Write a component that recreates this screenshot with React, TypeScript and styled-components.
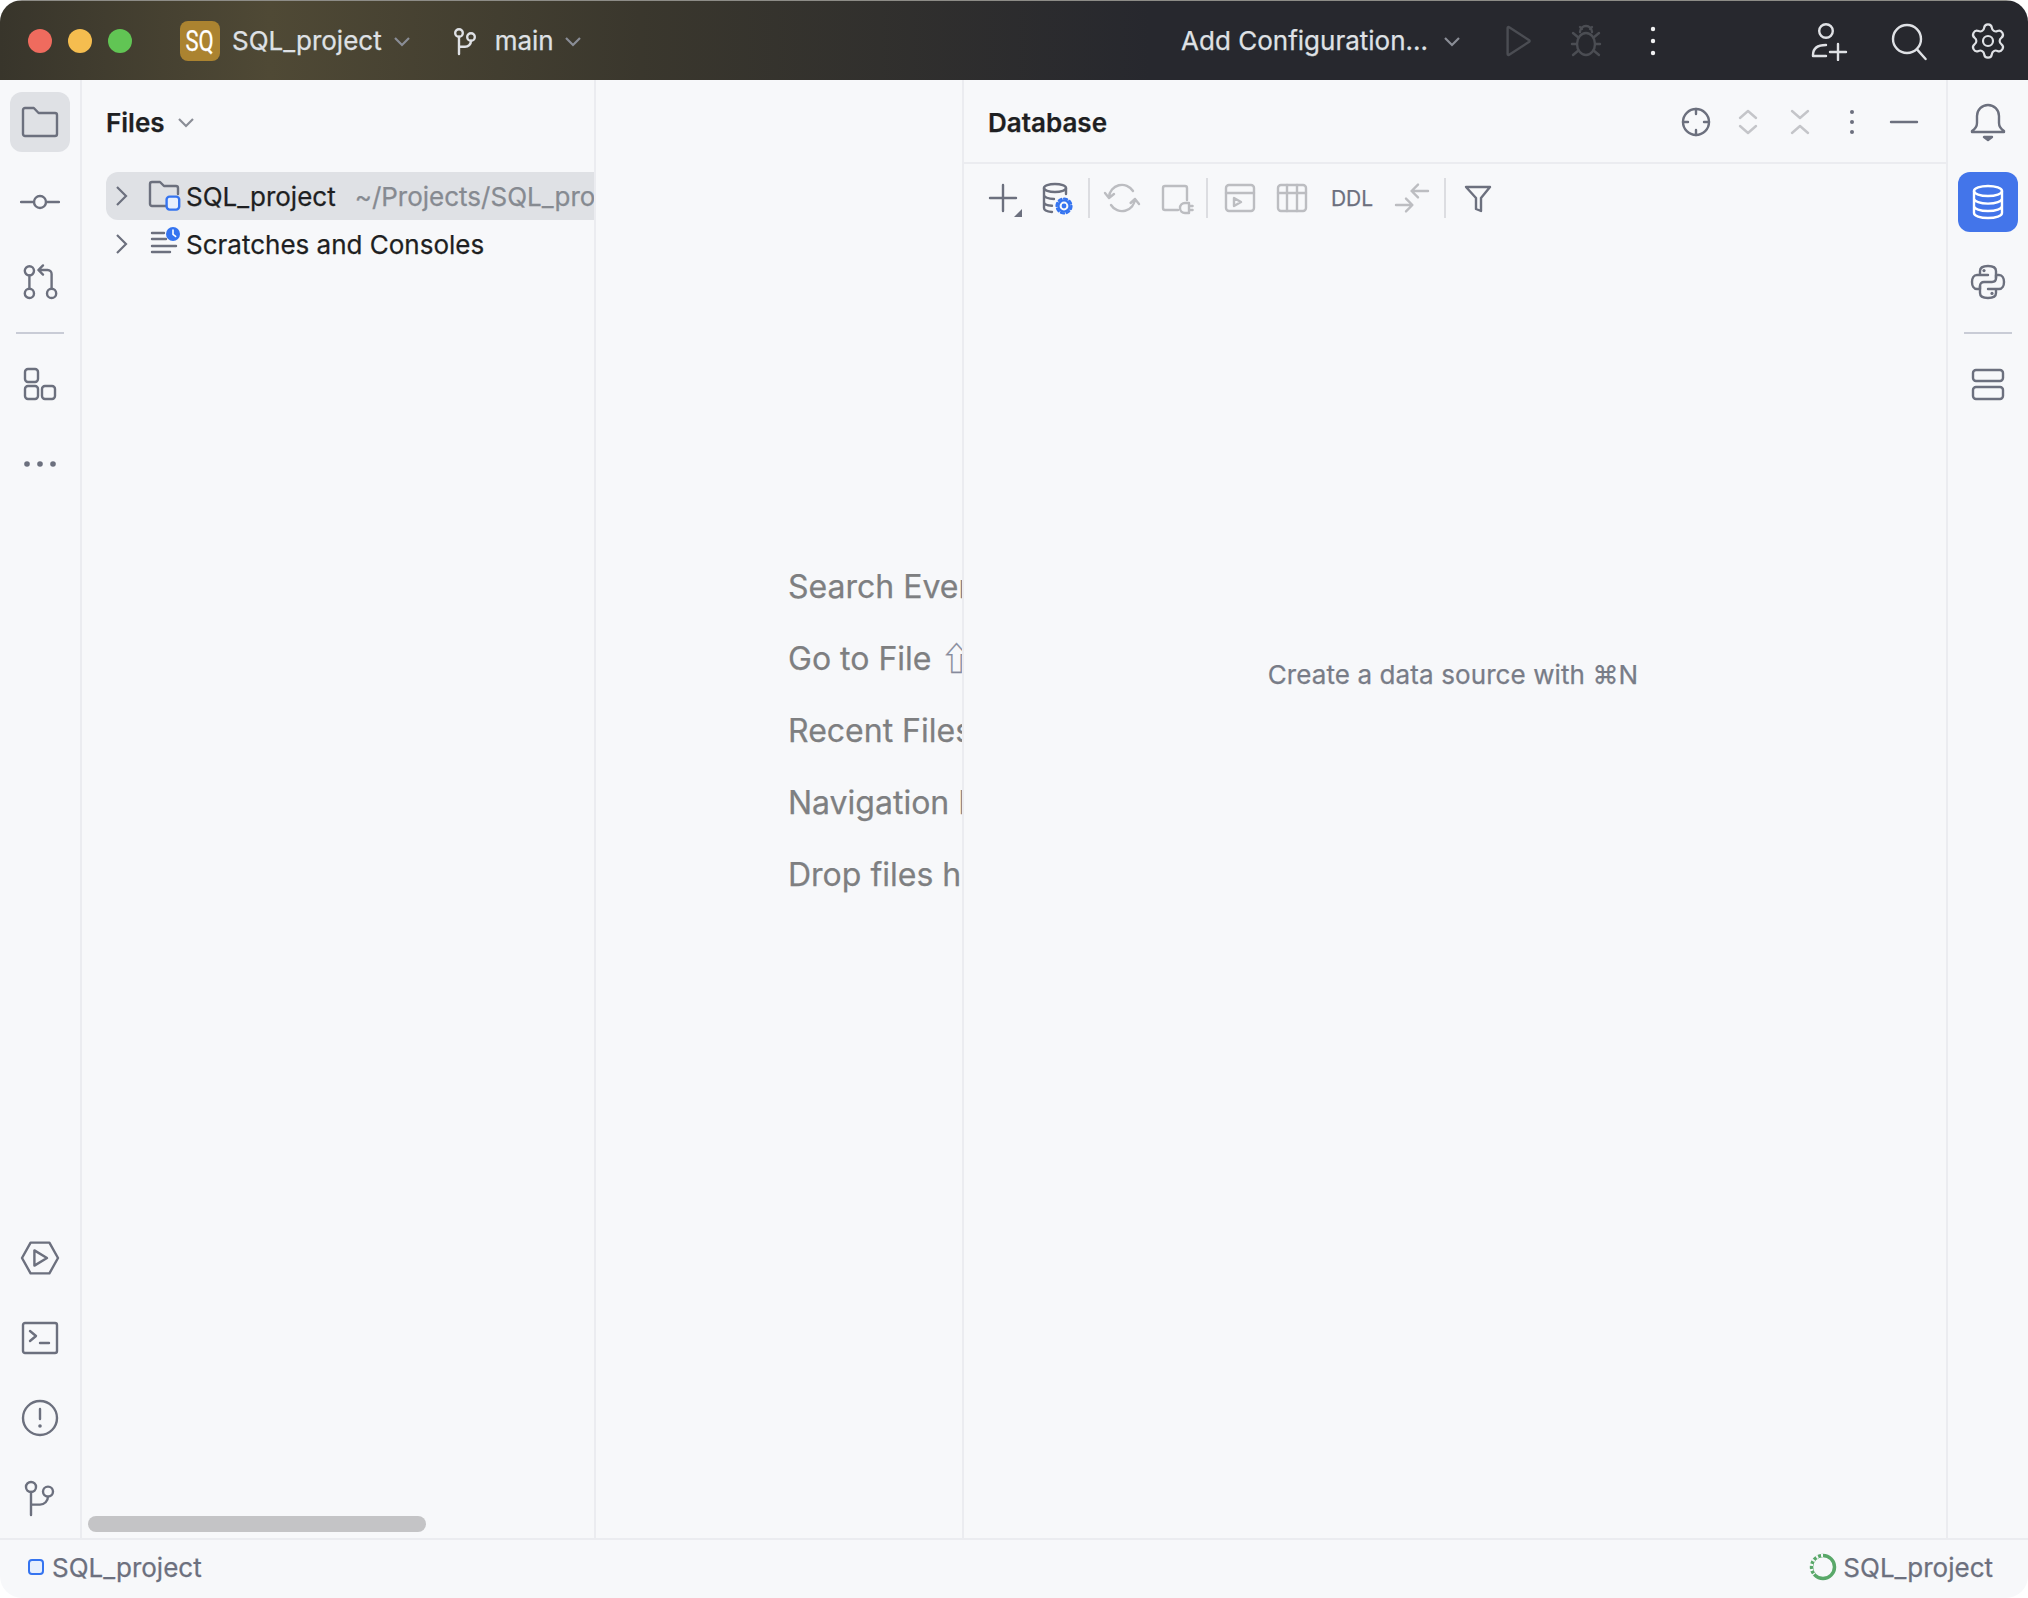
import React from 'react';
import styled, { createGlobalStyle } from 'styled-components';
import { Settings } from 'lucide-react';

const Global = createGlobalStyle`
  html, body { margin: 0; padding: 0; background: #ffffff; }
  * { box-sizing: border-box; }
`;

const Window = styled.div`
  width: 2028px;
  height: 1598px;
  display: flex;
  flex-direction: column;
  border-radius: 22px;
  overflow: hidden;
  background: #f7f8fa;
  font-family: Inter, "Noto Sans", sans-serif;
  font-size: 26px;
  color: #1e1f22;
  -webkit-text-stroke: 0.25px currentColor;
`;

const TitleBar = styled.header`
  height: 80px;
  flex: none;
  display: flex;
  align-items: center;
  padding-left: 28px;
  border-top: 1px solid #8d8c87;
  color: #dfe1e5;
  background: linear-gradient(90deg, #38352b 0, #4f4935 270px, #3a372d 640px, #27282e 1150px);
`;

const Light = styled.span<{ $c: string }>`
  width: 24px;
  height: 24px;
  border-radius: 50%;
  margin-right: 16px;
  background: ${p => p.$c};
`;

const ProjectBadge = styled.span`
  width: 40px;
  height: 40px;
  margin-left: 32px;
  border-radius: 8px;
  background: #ab8330;
  color: #fff;
  display: flex;
  align-items: center;
  justify-content: center;
`;

const BadgeText = styled.span`
  font-family: Roboto, sans-serif;
  font-size: 29px;
  transform: scaleX(0.76);
`;

const TitleLabel = styled.span<{ $ml: number }>`
  margin-left: ${p => p.$ml}px;
  white-space: nowrap;
`;

const Chevron = styled.svg.attrs({ viewBox: '0 0 16 16', width: 32, height: 32, fill: 'none' })<{ $ml?: number; $c?: string }>`
  margin-left: ${p => p.$ml ?? 0}px;
  flex: none;
  stroke: ${p => p.$c ?? '#8a8d96'};
  stroke-width: 1.1;
`;

const TitleSlot = styled.span<{ $ml: number; $w?: number }>`
  margin-left: ${p => p.$ml}px;
  display: flex;
  width: ${p => p.$w ?? 40}px;
  height: 40px;
  align-items: center;
  justify-content: center;
  flex: none;
`;

const Spacer = styled.div`
  flex: 1;
`;

const Icon = styled.svg.attrs({ viewBox: '0 0 20 20', width: 40, height: 40, fill: 'none' })<{ $c?: string }>`
  flex: none;
  display: block;
  stroke: ${p => p.$c ?? '#6c707e'};
  stroke-width: 1.2;
  stroke-linecap: round;
  stroke-linejoin: round;
`;

const Body = styled.div`
  flex: 1;
  min-height: 0;
  display: flex;
`;

const Stripe = styled.nav<{ $side: 'left' | 'right' }>`
  flex: none;
  width: 82px;
  padding: 12px 0 10px;
  display: flex;
  flex-direction: column;
  align-items: ${p => (p.$side === 'left' ? 'flex-start' : 'flex-end')};
  gap: 20px;
  ${p => (p.$side === 'left' ? 'border-right' : 'border-left')}: 2px solid #ebecf0;
`;

const StripeInner = styled.div`
  width: 80px;
  padding: 0 10px;
  display: flex;
  flex-direction: column;
  gap: 20px;
`;

const StripeButton = styled.button<{ $state?: 'on' | 'primary' }>`
  width: 60px;
  height: 60px;
  padding: 0;
  border: 0;
  border-radius: 12px;
  display: flex;
  align-items: center;
  justify-content: center;
  background: ${p => (p.$state === 'on' ? '#dfe1e5' : p.$state === 'primary' ? '#4375ea' : 'transparent')};
`;

const StripeSep = styled.div`
  height: 2px;
  width: 48px;
  margin: 0 6px;
  background: #c9ccd6;
`;

const FilesPanel = styled.section`
  position: relative;
  flex: none;
  width: 514px;
  border-right: 2px solid #ebecf0;
  overflow: hidden;
`;

const FilesHeader = styled.div`
  height: 84px;
  display: flex;
  align-items: center;
  padding-left: 24px;
  font-weight: 600;
`;

const TreeRow = styled.div<{ $selected?: boolean }>`
  height: 48px;
  margin-left: 24px;
  display: flex;
  align-items: center;
  white-space: nowrap;
  border-radius: 12px 0 0 12px;
  background: ${p => (p.$selected ? '#dfe1e5' : 'transparent')};
`;

const Tree = styled.div`
  padding-top: 8px;
`;

const TreeArrow = styled(Chevron)`
  margin-left: -1px;
`;

const TreeIcon = styled.span`
  margin-left: 9px;
  width: 40px;
  display: flex;
  flex: none;
`;

const PathHint = styled.span`
  margin-left: 19px;
  color: #868a91;
`;

const HScroll = styled.div`
  position: absolute;
  left: 6px;
  bottom: 6px;
  width: 338px;
  height: 16px;
  border-radius: 8px;
  background: #c4c4c6;
`;

const WelcomePanel = styled.section`
  flex: none;
  width: 368px;
  border-right: 2px solid #ebecf0;
  overflow: hidden;
  padding: 471px 0 0 192px;
  color: #7e7f81;
  font-size: 32px;
  line-height: 72px;
  white-space: nowrap;
`;

const Shortcut = styled.span`
  color: #868a9c;
  font-family: "Noto Sans CJK SC", "DejaVu Sans", Inter, sans-serif;
  line-height: 1;
`;

const DatabasePanel = styled.section`
  flex: 1;
  min-width: 0;
  display: flex;
  flex-direction: column;
`;

const DbHeader = styled.div`
  height: 84px;
  flex: none;
  display: flex;
  align-items: center;
  justify-content: space-between;
  padding: 2px 22px 0 24px;
  font-weight: 600;
  border-bottom: 2px solid #ebecf0;
`;

const ActionGroup = styled.div`
  display: flex;
  align-items: center;
  gap: 12px;
`;

const Toolbar = styled.div`
  height: 68px;
  flex: none;
  display: flex;
  align-items: center;
  gap: 12px;
  padding-left: 19px;
`;

const ToolButton = styled.span<{ $w?: number; $ml?: number }>`
  width: ${p => p.$w ?? 40}px;
  margin-left: ${p => p.$ml ?? 0}px;
  height: 40px;
  flex: none;
  display: flex;
  align-items: center;
  justify-content: center;
`;

const ToolText = styled(ToolButton)`
  color: #6c707e;
  font-size: 21px;
  font-weight: 400;
`;

const ToolSep = styled.span<{ $ml?: number }>`
  width: 2px;
  height: 40px;
  flex: none;
  margin-left: ${p => p.$ml ?? -2}px;
  background: #dcdde1;
`;

const EmptyText = styled.div`
  padding-top: 424px;
  text-align: center;
  padding-right: 4px;
  color: #787c87;
  font-size: 26px;
  line-height: 37px;
  letter-spacing: 0.1px;
`;

const StatusBar = styled.footer`
  height: 60px;
  flex: none;
  display: flex;
  align-items: center;
  justify-content: space-between;
  padding: 0 35px 4px 28px;
  border-top: 2px solid #ebecf0;
  color: #6c707e;
`;

const StatusItem = styled.div`
  display: flex;
  align-items: center;
`;

const ModuleSquare = styled.span`
  width: 16px;
  height: 16px;
  margin-right: 8px;
  border-radius: 4px;
  border: 2px solid #3574f0;
  background: #e7effd;
`;

const RingIcon = styled.svg.attrs({ viewBox: '0 0 28 28', width: 28, height: 28, fill: 'none' })`
  margin-right: 6px;
`;

const ChevronDown = ({ ml, c }: { ml?: number; c?: string }) => (
  <Chevron $ml={ml} $c={c}><path d="M4.5 6.5 8 10l3.500-3.500" /></Chevron>
);

const Glyph: Record<string, React.ReactNode> = {
  folder: <path d="M2.500 3h4.400l2.400 2.500h8.200a1 1 0 0 1 1 1V16a1 1 0 0 1-1 1H2.500a1 1 0 0 1-1-1V4a1 1 0 0 1 1-1z" />,
  commit: <><circle cx="10" cy="10" r="3" /><path d="M.5 10H7M13 10h6.500" /></>,
  pull: <><circle cx="4.700" cy="4.400" r="2.300" /><circle cx="4.700" cy="15.700" r="2.300" /><circle cx="15.800" cy="15.700" r="2.300" /><path d="M4.700 6.700v6.700M15.800 13.400V6a2 2 0 0 0-2-2H9.500M11.500 1.700 9.200 4l2.300 2.300" /></>,
  structure: <><rect x="2.500" y="2.500" width="6.500" height="6.500" rx="1.500" /><rect x="2.500" y="11" width="6.500" height="6.500" rx="1.500" /><rect x="11" y="11" width="6.500" height="6.500" rx="1.500" /></>,
  more: <g fill="#6c707e" stroke="none"><circle cx="3.500" cy="10" r="1.400" /><circle cx="10" cy="10" r="1.400" /><circle cx="16.500" cy="10" r="1.400" /></g>,
  run: <><path d="M1 10 5.300 2.300h9.400L19 10l-4.300 7.700H5.300z" /><path d="M7.200 6.200v7.600l6.300-3.800z" /></>,
  terminal: <><rect x="1.500" y="2.500" width="17" height="15" rx="1" /><path d="M5 6.500 8 9l-3 2.500M10 12.500h4.500" /></>,
  problems: <><circle cx="10" cy="10" r="8.500" /><path d="M10 5.500v5" /><circle cx="10" cy="14" r=".9" fill="#6c707e" stroke="none" /></>,
  git: <><circle cx="5.500" cy="4.500" r="2.500" /><circle cx="14" cy="6.800" r="2.500" /><path d="M5.500 7v11.500M14 9.300a4 4 0 0 1-4 4H5.500" /></>,
  bell: <><path d="M2 14.500c1.500-1 2.500-2.200 2.500-4V7a5.500 5.500 0 0 1 11 0v3.500c0 1.800 1 3 2.500 4v.5H2z" /><path d="M8 17.500h4l-2 1.500z" fill="#6c707e" /></>,
  db: <g stroke="#fff"><ellipse cx="10" cy="4.500" rx="7" ry="2.500" /><path d="M3 4.500v11c0 1.400 3.100 2.500 7 2.500s7-1.100 7-2.500v-11M3 8.300c0 1.400 3.100 2.500 7 2.500s7-1.100 7-2.500M3 12c0 1.400 3.100 2.500 7 2.500s7-1.100 7-2.500" /></g>,
  python: <><path d="M6 6.500V4.500C6 2.800 7.800 2 10 2s4 .8 4 2.500V8c0 1.200-.8 2-2 2H8c-1.200 0-2 .8-2 2v1.500H4.500C2.800 13.500 2 11.800 2 10s.8-3.500 2.500-3.500H10" /><path transform="rotate(180 10 10)" d="M6 6.500V4.500C6 2.800 7.800 2 10 2s4 .8 4 2.500V8M6 12v1.500H4.500C2.800 13.500 2 11.800 2 10s.8-3.500 2.500-3.500H10" /><g fill="#6c707e" stroke="none"><circle cx="8" cy="4.300" r=".8" /><circle cx="12" cy="15.700" r=".8" /></g></>,
  layout: <><rect x="2.500" y="3" width="15" height="5.500" rx="1.500" /><rect x="2.500" y="11.500" width="15" height="6" rx="1.500" /></>,
  branch: <><circle cx="7" cy="6" r="1.900" /><circle cx="13" cy="8" r="1.900" /><path d="M7 7.900v8.600M13 9.900a3 3 0 0 1-3 3H7" /></>,
  playOutline: <path d="M5.800 3.500v13a.5.5 0 0 0 .8.400l10-6.500a.5.5 0 0 0 0-.8l-10-6.500a.5.500 0 0 0-.8.400z" />,
  bug: <><ellipse cx="10" cy="11.500" rx="4.500" ry="5.500" /><path d="M7 5.500a3 3 0 0 1 6 0M5.500 11.500H3M17 11.500h-2.500M5.900 8 3.500 6M14.100 8l2.400-2M5.900 15l-2.400 2M14.100 15l2.400 2M7 3l1 1M13 3l-1 1" /></>,
  dotsLight: <g fill="#f0f1f2" stroke="none"><circle cx="10" cy="4" r="1.100" /><circle cx="10" cy="10" r="1.100" /><circle cx="10" cy="16" r="1.100" /></g>,
  userAdd: <><circle cx="8" cy="5" r="3.400" /><path d="M1.500 17.500v-.5c0-3.300 2.500-5 6.500-5M1.500 17.500H8M14 11.500v8M10 15.500h8" /></>,
  search: <><circle cx="9" cy="9" r="7" /><path d="m14 14.200 4.300 4.800" /></>,
  treeFolder: <path d="M12 15H3a1 1 0 0 1-1-1V4a1 1 0 0 1 1-1h4l2 2h6a1 1 0 0 1 1 1v3" />,
  target: <><circle cx="10" cy="10" r="6.500" /><path d="M10 3.500v2.500M10 14v2.500M3.500 10H6M14 10h2.500" /></>,
  expand: <path d="m6 8 4-3.500L14 8M6 12l4 3.500 4-3.500" />,
  collapse: <path d="m6 4.500 4 3.500 4-3.500M6 15.500 10 12l4 3.500" />,
  dots: <g fill="#6c707e" stroke="none"><circle cx="10" cy="5" r="1" /><circle cx="10" cy="10" r="1" /><circle cx="10" cy="15" r="1" /></g>,
  minus: <path d="M3.500 10h13" />,
  refresh: <path d="M3.500 9.500a6.500 6.500 0 0 1 12-3M16.500 10.500a6.500 6.500 0 0 1-12 3M1.500 7.500l2 2.500 2.500-2M14.300 12.500l2.200-2 2 2.500" />,
  plug: <path d="M11 16H4.500a1 1 0 0 1-1-1V5a1 1 0 0 1 1-1h10a1 1 0 0 1 1 1v6M16.500 12.500h-2a2.500 2.500 0 0 0 0 5h2zM16.500 14h1.800M16.500 16h1.800" />,
  consoleTab: <><rect x="3" y="3.500" width="14" height="13" rx="1.500" /><path d="M3 7.500h14M7 10v4l3.500-2z" /></>,
  table: <><rect x="3" y="3.500" width="14" height="13" rx="1.500" /><path d="M3 7.500h14M7.500 3.500v13M12.500 3.500v13" /></>,
  compare: <path d="M18 6.500H9.800M13 3.300 9.800 6.500 13 9.700M2 13.500h8M7 10.300l3.200 3.200L7 16.700" />,
  filter: <path d="M4 4.500h12L11.500 10v6.500L9 15.500V10z" />,
};

const G = ({ n, c }: { n: string; c?: string }) => <Icon $c={c}>{Glyph[n]}</Icon>;

const DISABLED = '#bcbdc1';

const App = () => (
  <>
    <Global />
    <Window>
      <TitleBar>
        <Light $c="#ef6b5e" />
        <Light $c="#f5bd4f" />
        <Light $c="#61c554" />
        <ProjectBadge><BadgeText>SQ</BadgeText></ProjectBadge>
        <TitleLabel $ml={12}>SQL_project</TitleLabel>
        <ChevronDown ml={4} />
        <TitleSlot $ml={27}><G n="branch" c="#dfe1e5" /></TitleSlot>
        <TitleLabel $ml={10}>main</TitleLabel>
        <ChevronDown ml={3} />
        <Spacer />
        <TitleLabel $ml={0}>Add Configuration...</TitleLabel>
        <ChevronDown ml={8} />
        <TitleSlot $ml={28}><G n="playOutline" c="#4b4d53" /></TitleSlot>
        <TitleSlot $ml={30}><G n="bug" c="#4b4d53" /></TitleSlot>
        <TitleSlot $ml={27}><G n="dotsLight" /></TitleSlot>
        <TitleSlot $ml={137}><G n="userAdd" c="#dfe1e5" /></TitleSlot>
        <TitleSlot $ml={39}><G n="search" c="#dfe1e5" /></TitleSlot>
        <TitleSlot $ml={39}><Settings size={40} strokeWidth={1.300} color="#dfe1e5" /></TitleSlot>
        <TitleSlot $ml={0} $w={20} />
      </TitleBar>
      <Body>
        <Stripe $side="left">
          <StripeInner>
            <StripeButton $state="on"><G n="folder" /></StripeButton>
            <StripeButton><G n="commit" /></StripeButton>
            <StripeButton><G n="pull" /></StripeButton>
            <StripeSep />
            <StripeButton><G n="structure" /></StripeButton>
            <StripeButton><G n="more" /></StripeButton>
          </StripeInner>
          <Spacer />
          <StripeInner>
            <StripeButton><G n="run" /></StripeButton>
            <StripeButton><G n="terminal" /></StripeButton>
            <StripeButton><G n="problems" /></StripeButton>
            <StripeButton><G n="git" /></StripeButton>
          </StripeInner>
        </Stripe>
        <FilesPanel>
          <FilesHeader>Files<ChevronDown ml={5} /></FilesHeader>
          <Tree>
            <TreeRow $selected>
              <TreeArrow $c="#6c707e"><path d="m6 3.500 4.500 4.500L6 12.500" /></TreeArrow>
              <TreeIcon>
                <Icon>
                  {Glyph.treeFolder}
                  <rect x="10.300" y="10.300" width="6.300" height="6.500" rx="1.500" fill="#e7effd" stroke="#3574f0" />
                </Icon>
              </TreeIcon>
              <span>SQL_project</span>
              <PathHint>~/Projects/SQL_project</PathHint>
            </TreeRow>
            <TreeRow>
              <TreeArrow $c="#6c707e"><path d="m6 3.500 4.500 4.500L6 12.500" /></TreeArrow>
              <TreeIcon>
                <Icon>
                  <path d="M3 4.500h6M3 7.500h7M3 11h12M3 14h9" />
                  <circle cx="13.500" cy="5" r="3.500" fill="#3574f0" stroke="none" />
                  <path d="M13.500 3v2.200l1.300 1" stroke="#fff" strokeWidth=".8" />
                </Icon>
              </TreeIcon>
              <span>Scratches and Consoles</span>
            </TreeRow>
          </Tree>
          <HScroll />
        </FilesPanel>
        <WelcomePanel>
          <div>Search Everywhere <Shortcut>Double ⇧</Shortcut></div>
          <div>Go to File <Shortcut>⇧⌘O</Shortcut></div>
          <div>Recent Files <Shortcut>⌘E</Shortcut></div>
          <div>Navigation Bar <Shortcut>⌘↑</Shortcut></div>
          <div>Drop files here to open</div>
        </WelcomePanel>
        <DatabasePanel>
          <DbHeader>
            <span>Database</span>
            <ActionGroup>
              <ToolButton><G n="target" /></ToolButton>
              <ToolButton><G n="expand" c="#c4c5c9" /></ToolButton>
              <ToolButton><G n="collapse" c="#c4c5c9" /></ToolButton>
              <ToolButton><G n="dots" /></ToolButton>
              <ToolButton><G n="minus" /></ToolButton>
            </ActionGroup>
          </DbHeader>
          <Toolbar>
            <ToolButton>
              <Icon>
                <path d="M10 3.500v13M3.500 10h13" />
                <path d="M19.500 15.500v4h-4z" fill="#6c707e" stroke="none" />
              </Icon>
            </ToolButton>
            <ToolButton $ml={3}>
              <Icon>
                <ellipse cx="8.500" cy="5" rx="5.500" ry="2" />
                <path d="M3 5v10c0 1 1.500 1.800 4 2M14 5v3M3 8.500c0 1 2 2 5 2M3 12c0 1 1.500 1.700 4 1.900" />
                <g stroke="#3574f0">
                  <circle cx="13" cy="14" r="2.800" fill="#f7f8fa" />
                  <circle cx="13" cy="14" r="3.700" strokeDasharray="1.500 1.400" />
                  <circle cx="13" cy="14" r=".6" fill="#3574f0" />
                </g>
              </Icon>
            </ToolButton>
            <ToolSep />
            <ToolButton><G n="refresh" c={DISABLED} /></ToolButton>
            <ToolButton $ml={2}><G n="plug" c={DISABLED} /></ToolButton>
            <ToolSep />
            <ToolButton><G n="consoleTab" c={DISABLED} /></ToolButton>
            <ToolButton><G n="table" c={DISABLED} /></ToolButton>
            <ToolText $w={56}>DDL</ToolText>
            <ToolButton><G n="compare" c={DISABLED} /></ToolButton>
            <ToolSep $ml={0} />
            <ToolButton><G n="filter" /></ToolButton>
          </Toolbar>
          <EmptyText>Create a data source with ⌘N</EmptyText>
        </DatabasePanel>
        <Stripe $side="right">
          <StripeInner>
            <StripeButton><G n="bell" /></StripeButton>
            <StripeButton $state="primary"><G n="db" /></StripeButton>
            <StripeButton><G n="python" /></StripeButton>
            <StripeSep />
            <StripeButton><G n="layout" /></StripeButton>
          </StripeInner>
        </Stripe>
      </Body>
      <StatusBar>
        <StatusItem><ModuleSquare />SQL_project</StatusItem>
        <StatusItem>
          <RingIcon>
            <circle cx="14" cy="14" r="11.500" stroke="#59a869" strokeWidth="3.500" />
            <path d="M14 2.500A11.500 11.500 0 0 0 5 21.500" stroke="#f7f8fa" strokeWidth="3.500" strokeDasharray="2 3" />
          </RingIcon>
          SQL_project
        </StatusItem>
      </StatusBar>
    </Window>
  </>
);

export default App;
